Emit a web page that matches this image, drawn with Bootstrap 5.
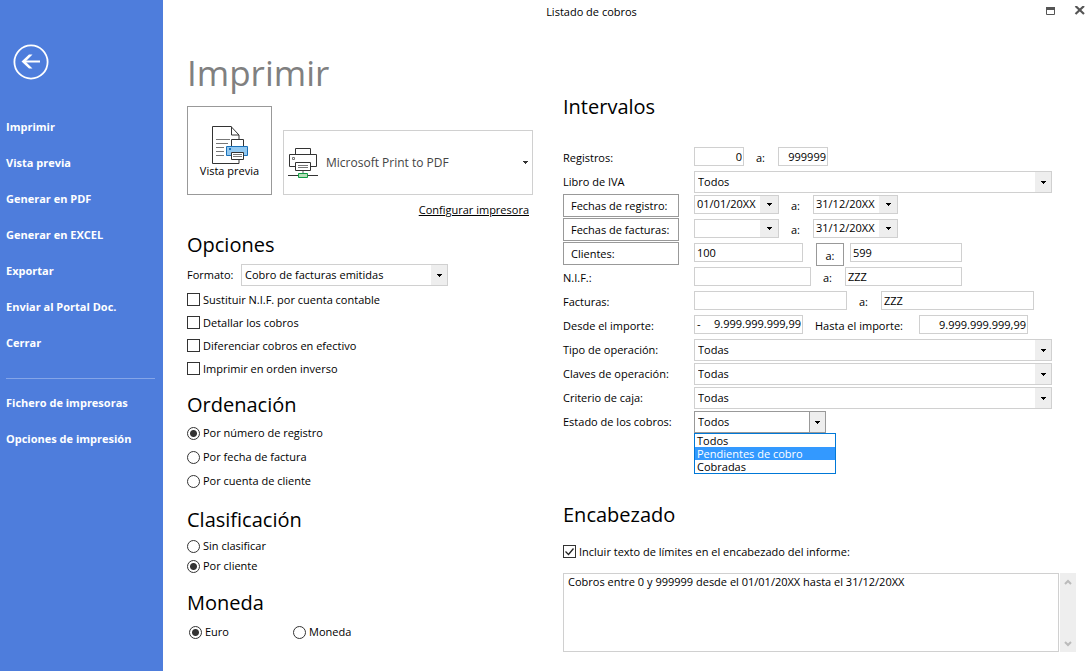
<!DOCTYPE html>
<html lang="es">
<head>
<meta charset="utf-8">
<meta name="viewport" content="width=device-width, initial-scale=1">
<title>Listado de cobros</title>
<link href="https://cdn.jsdelivr.net/npm/bootstrap@5.3.0/dist/css/bootstrap.min.css" rel="stylesheet">
<style>
  body { font: 11px/16px "Open Sans", "Noto Sans", sans-serif; color: #000; background: #fff; }
  button, input, select, textarea { font: inherit; color: inherit; }
  h1 { font-size: 35px; line-height: 50px; font-weight: 400; color: #808080; margin: 0 0 8px; }
  h2 { font-size: 20px; line-height: 30px; font-weight: 400; margin: 0; }

  /* Sidebar */
  .side { width: 163px; background: #4e7ddc; padding: 44px 8px 0 6px; }
  .side .nav-link { color: #fff; font-weight: 700; line-height: 16px; padding: 10px 0; }
  .side hr { margin: 17px 0 6px; border-color: #a9c0f0; opacity: .6; }
  .back { width: 36px; height: 36px; margin: 0 0 29px 7px; }

  /* Title bar */
  .titlebar { height: 24px; }
  .winctl { width: 72px; height: 20px; padding: 0 6px 0 0; }

  .leftcol { width: 400px; padding: 24px 30px 0 24px; }
  .leftcol .col-body { width: 346px; }
  .leftcol h2 { margin: 12px 0 1px; }
  .rightcol { padding: 68px 16px 0 0; min-width: 0; }

  .preview { width: 85px; height: 89px; border: 1px solid #999; background: #fff; padding: 10px 0 0; line-height: 12px; }
  .printer { height: 65px; border: 1px solid #d0d0d0; background: #fff; color: #444; font-size: 12px; padding: 0 4px; gap: 6px; }

  .opt { display: flex; align-items: center; gap: 3px; height: 23px; }
  .opt input { appearance: none; width: 13px; height: 13px; margin: 0; border: 1px solid #333; background: #fff; flex: none; }
  .opt input[type=radio] { border-radius: 50%; }
  .opt input[type=radio]:checked { background: radial-gradient(circle, #333 0 3px, #fff 4px); }
  .opt input[type=checkbox]:checked { background: url("data:image/svg+xml,%3Csvg xmlns='http://www.w3.org/2000/svg' viewBox='0 0 11 11'%3E%3Cpath d='M1.5 5.5l3 3 5-6' fill='none' stroke='%23222' stroke-width='1.3'/%3E%3C/svg%3E") center/11px no-repeat; }
  .r24 .opt { height: 24px; }
  .r20 .opt { height: 20px; }

  .combo { appearance: none; height: 22px; border: 1px solid #d0d0d0; border-radius: 0; padding: 0 20px 0 3px;
    background: url("data:image/svg+xml,%3Csvg xmlns='http://www.w3.org/2000/svg' width='5' height='3'%3E%3Cpath d='M0 0h5v1H4v1H3v1H2V2H1V1H0z'/%3E%3C/svg%3E") right 5px center/5px 3px no-repeat,
      linear-gradient(#eee, #eee) right/16px 100% no-repeat #fff; }
  .combo.active { border-color: #999; width: 132px;
    background: url("data:image/svg+xml,%3Csvg xmlns='http://www.w3.org/2000/svg' width='5' height='3'%3E%3Cpath d='M0 0h5v1H4v1H3v1H2V2H1V1H0z'/%3E%3C/svg%3E") right 5px center/5px 3px no-repeat,
      linear-gradient(#eee, #eee) right/15px 100% no-repeat,
      linear-gradient(#999, #999) right/16px 100% no-repeat #fff; }
  .combo-wrap { position: relative; }
  .options { position: absolute; top: 22px; left: 0; width: 142px; border: 1px solid #0078d7; background: #fff; z-index: 2; line-height: 13px; }
  .options li { padding: 0 2px; }
  .options li.sel { background: #3399ff; color: #fff; }

  .fila { display: flex; height: 24px; align-items: flex-start; padding-top: 1px; }
  .etq { width: 131px; flex: none; line-height: 22px; }
  .etq button { width: 116px; text-align: left; padding: 0 7px; }
  .boton { height: 23px; border: 1px solid #999; background: #fff; line-height: 21px; display: block; }
  .etq .boton { margin-top: -1px; }
  .campo { height: 19px; border: 1px solid #d0d0d0; background: #fff; padding: 0 2px 1px; line-height: 16px; border-radius: 0; min-width: 0; }
  .campo.num { text-align: right; padding-right: 1px; }
  .w50 { width: 50px; } .w85 { width: 85px; } .w109 { width: 109px; } .w112 { width: 112px; } .w117 { width: 117px; } .w153 { width: 153px; }
  .sep { line-height: 22px; width: 34px; padding-left: 12px; flex: none; }
  .sep.wide { width: 116px; }
  .campo.fecha { display: flex; padding: 0; }
  .fecha input, .signo input { border: 0; padding: 0 0 1px 2px; width: 66px; min-width: 0; background: none; }
  .fecha button { border: 0; background: #eee; width: 18px; padding: 0; display: grid; place-items: center; flex: none; margin-left: auto; }
  .signo { display: flex; }
  .signo input { flex: 1; padding: 0; text-align: right; margin-right: -1px; }

  .memo { height: 79px; border: 1px solid #d0d0d0; resize: none; padding: 0 4px; overflow: hidden; }
  .barra { width: 16px; background: #eee; padding: 6px 0 5px; }
</style>
</head>
<body class="d-flex min-vh-100">

<aside class="side flex-shrink-0">
  <button class="back btn p-0 border-0 d-block" aria-label="Volver">
    <svg class="d-block" width="36" height="36" viewBox="0 0 36 36" fill="none" stroke="#fff"><circle cx="18" cy="18" r="16.600" stroke-width="1.800"/><path d="M11 17.500h16" stroke-width="2"/><path d="M16 10.500l-7.500 7 7.500 7h3.500l-7-7 7-7z" fill="#fff" stroke="none"/></svg>
  </button>
  <nav class="nav flex-column">
    <a class="nav-link" href="#">Imprimir</a>
    <a class="nav-link" href="#">Vista previa</a>
    <a class="nav-link" href="#">Generar en PDF</a>
    <a class="nav-link" href="#">Generar en EXCEL</a>
    <a class="nav-link" href="#">Exportar</a>
    <a class="nav-link" href="#">Enviar al Portal Doc.</a>
    <a class="nav-link" href="#">Cerrar</a>
    <hr>
    <a class="nav-link" href="#">Fichero de impresoras</a>
    <a class="nav-link" href="#">Opciones de impresión</a>
  </nav>
</aside>

<main class="flex-grow-1">
  <header class="titlebar d-flex align-items-center">
    <div class="flex-grow-1 text-center">Listado de cobros</div>
    <div class="winctl d-flex justify-content-end gap-3">
      <button class="btn p-0 border-0 d-flex pt-1" aria-label="Maximizar"><svg width="14" height="12" viewBox="0 0 14 12"><path d="M2.500 1.500h8v7h-8z" fill="none" stroke="#555"/><path d="M2 1h9v3H2z" fill="#555"/></svg></button>
      <button class="btn p-0 border-0 d-flex pt-1" aria-label="Cerrar"><svg width="12" height="12" viewBox="0 0 12 12"><path d="M1.500 0l8.500 8M10 0l-8.500 8" stroke="#555" stroke-width="2.200"/></svg></button>
    </div>
  </header>

  <div class="d-flex">
    <section class="leftcol flex-shrink-0">
      <h1>Imprimir</h1>
      <div class="col-body">
        <div class="d-flex align-items-end" style="gap:11px">
          <button class="preview d-flex flex-column align-items-center">
            <svg class="flex-shrink-0" width="38" height="48" viewBox="0 0 38 48" fill="none">
              <path d="M1.500 9.500h18.500l8 8.500v28.500h-26.500z" fill="#fff" stroke="#333"/>
              <path d="M20.500 9.500v8.500h7.500" stroke="#333"/>
              <path d="M5 22.500h14M5 26.500h12M5 30.500h8M5 34.500h8M5 38.500h8" stroke="#777"/>
              <path d="M20.500 22.500h12v7h-12z" fill="#fff" stroke="#333"/>
              <path d="M15.500 29.500h21v9h-21z" fill="#92c8f0" stroke="#1a70b8"/>
              <path d="M18 31h2v2h-2z" fill="#1a70b8"/>
              <path d="M20.500 35.500h12v7h-12z" fill="#fff" stroke="#333"/>
              <path d="M22 37.500h9M22 39.500h9" stroke="#777"/>
            </svg>
            <span>Vista previa</span>
          </button>
          <button class="printer flex-grow-1 d-flex align-items-center">
            <svg width="32" height="32" viewBox="0 0 32 32" fill="none">
              <path d="M7.500 1.500h15v6h-15z" stroke="#333"/>
              <path d="M7.500 19.500h-6v-12h27v12h-6" stroke="#333"/>
              <path d="M4.500 10.500h2v2h-2z" stroke="#777"/>
              <path d="M7.500 15.500h15v8h-15z" fill="#fff" stroke="#333"/>
              <path d="M10 18.500h10M10 20.500h10" stroke="#777"/>
              <path d="M15 24v2" stroke="#aaa" stroke-width="2"/>
              <path d="M0 28.500h30" stroke="#333"/>
              <path d="M10.500 26.500h9v4h-9z" fill="#b5dfb8" stroke="#119c44"/>
            </svg>
            <span>Microsoft Print to PDF</span>
            <svg class="ms-auto" width="5" height="3" viewBox="0 0 5 3"><path d="M0 0h5v1H4v1H3v1H2V2H1V1H0z" fill="#333"/></svg>
          </button>
        </div>
        <div class="text-end pe-1" style="margin-top:7px"><a class="text-black" href="#">Configurar impresora</a></div>
      </div>

      <h2>Opciones</h2>
      <div class="d-flex align-items-center mt-1">
        <label for="formato" style="width:54px">Formato:</label>
        <select id="formato" class="combo" style="width:207px"><option>Cobro de facturas emitidas</option></select>
      </div>
      <div style="padding-top:2px">
        <label class="opt"><input type="checkbox">Sustituir N.I.F. por cuenta contable</label>
        <label class="opt"><input type="checkbox">Detallar los cobros</label>
        <label class="opt"><input type="checkbox">Diferenciar cobros en efectivo</label>
        <label class="opt"><input type="checkbox">Imprimir en orden inverso</label>
      </div>

      <h2 style="margin-top:10px">Ordenación</h2>
      <div class="r24">
        <label class="opt"><input type="radio" name="ord" checked>Por número de registro</label>
        <label class="opt"><input type="radio" name="ord">Por fecha de factura</label>
        <label class="opt"><input type="radio" name="ord">Por cuenta de cliente</label>
      </div>

      <h2>Clasificación</h2>
      <div class="r20">
        <label class="opt"><input type="radio" name="cla">Sin clasificar</label>
        <label class="opt"><input type="radio" name="cla" checked>Por cliente</label>
      </div>

      <h2>Moneda</h2>
      <div class="d-flex mt-1 r20" style="padding-left:2px">
        <label class="opt" style="width:104px"><input type="radio" name="mon" checked>Euro</label>
        <label class="opt"><input type="radio" name="mon">Moneda</label>
      </div>
    </section>

    <section class="rightcol flex-grow-1">
      <h2>Intervalos</h2>
      <div class="mt-4 pe-4">
        <div class="fila"><label class="etq" for="reg1">Registros:</label><input id="reg1" class="campo num w50" value="0"><label class="sep" for="reg2">a:</label><input id="reg2" class="campo num w50" value="999999"></div>
        <div class="fila"><label class="etq" for="libro">Libro de IVA</label><select id="libro" class="combo flex-grow-1"><option>Todos</option></select></div>
        <div class="fila"><div class="etq"><button class="boton">Fechas de registro:</button></div>
          <div class="campo fecha w85"><input aria-label="Fecha de registro desde" value="01/01/20XX"><button aria-label="Abrir calendario"><svg width="5" height="3"><path d="M0 0h5v1H4v1H3v1H2V2H1V1H0z"/></svg></button></div>
          <label class="sep" for="fr2">a:</label>
          <div class="campo fecha w85"><input id="fr2" value="31/12/20XX"><button aria-label="Abrir calendario"><svg width="5" height="3"><path d="M0 0h5v1H4v1H3v1H2V2H1V1H0z"/></svg></button></div></div>
        <div class="fila"><div class="etq"><button class="boton">Fechas de facturas:</button></div>
          <div class="campo fecha w85"><input aria-label="Fecha de facturas desde"><button aria-label="Abrir calendario"><svg width="5" height="3"><path d="M0 0h5v1H4v1H3v1H2V2H1V1H0z"/></svg></button></div>
          <label class="sep" for="ff2">a:</label>
          <div class="campo fecha w85"><input id="ff2" value="31/12/20XX"><button aria-label="Abrir calendario"><svg width="5" height="3"><path d="M0 0h5v1H4v1H3v1H2V2H1V1H0z"/></svg></button></div></div>
        <div class="fila"><div class="etq"><button class="boton">Clientes:</button></div><input aria-label="Cliente desde" class="campo w109" value="100"><button class="boton px-2" style="width:28px;margin:0 6px 0 13px">a:</button><input aria-label="Cliente hasta" class="campo w112" value="599"></div>
        <div class="fila"><label class="etq" for="nif1">N.I.F.:</label><input id="nif1" class="campo w117"><label class="sep" for="nif2">a:</label><input id="nif2" class="campo w117" value="ZZZ"></div>
        <div class="fila"><label class="etq" for="fac1">Facturas:</label><input id="fac1" class="campo w153"><label class="sep" for="fac2">a:</label><input id="fac2" class="campo w153" value="ZZZ"></div>
        <div class="fila"><label class="etq" for="imp1">Desde el importe:</label><div class="campo signo w109"><span>-</span><input id="imp1" value="9.999.999.999,99"></div><label class="sep wide" for="imp2">Hasta el importe:</label><input id="imp2" class="campo num w109" value="9.999.999.999,99"></div>
        <div class="fila"><label class="etq" for="tipo">Tipo de operación:</label><select id="tipo" class="combo flex-grow-1"><option>Todas</option></select></div>
        <div class="fila"><label class="etq" for="clave">Claves de operación:</label><select id="clave" class="combo flex-grow-1"><option>Todas</option></select></div>
        <div class="fila"><label class="etq" for="caja">Criterio de caja:</label><select id="caja" class="combo flex-grow-1"><option>Todas</option></select></div>
        <div class="fila"><label class="etq" for="estado">Estado de los cobros:</label>
          <div class="combo-wrap"><select id="estado" class="combo active"><option>Todos</option></select>
            <ul class="options list-unstyled m-0"><li>Todos</li><li class="sel">Pendientes de cobro</li><li>Cobradas</li></ul></div></div>
      </div>

      <h2 style="margin-top:66px">Encabezado</h2>
      <label class="opt mt-2 pt-1"><input type="checkbox" checked>Incluir texto de límites en el encabezado del informe:</label>
      <div class="d-flex mt-2 pt-1" style="gap:1px">
        <textarea class="memo flex-grow-1" aria-label="Texto del encabezado">Cobros entre 0 y 999999 desde el 01/01/20XX hasta el 31/12/20XX</textarea>
        <div class="barra d-flex flex-column justify-content-between align-items-center">
          <svg width="8" height="6" fill="none" stroke="#bbb" stroke-width="2"><path d="M1 5l3-3 3 3"/></svg>
          <svg width="8" height="6" fill="none" stroke="#bbb" stroke-width="2"><path d="M1 1l3 3 3-3"/></svg>
        </div>
      </div>
    </section>
  </div>
</main>

<script src="https://cdn.jsdelivr.net/npm/bootstrap@5.3.0/dist/js/bootstrap.bundle.min.js"></script>
</body>
</html>
